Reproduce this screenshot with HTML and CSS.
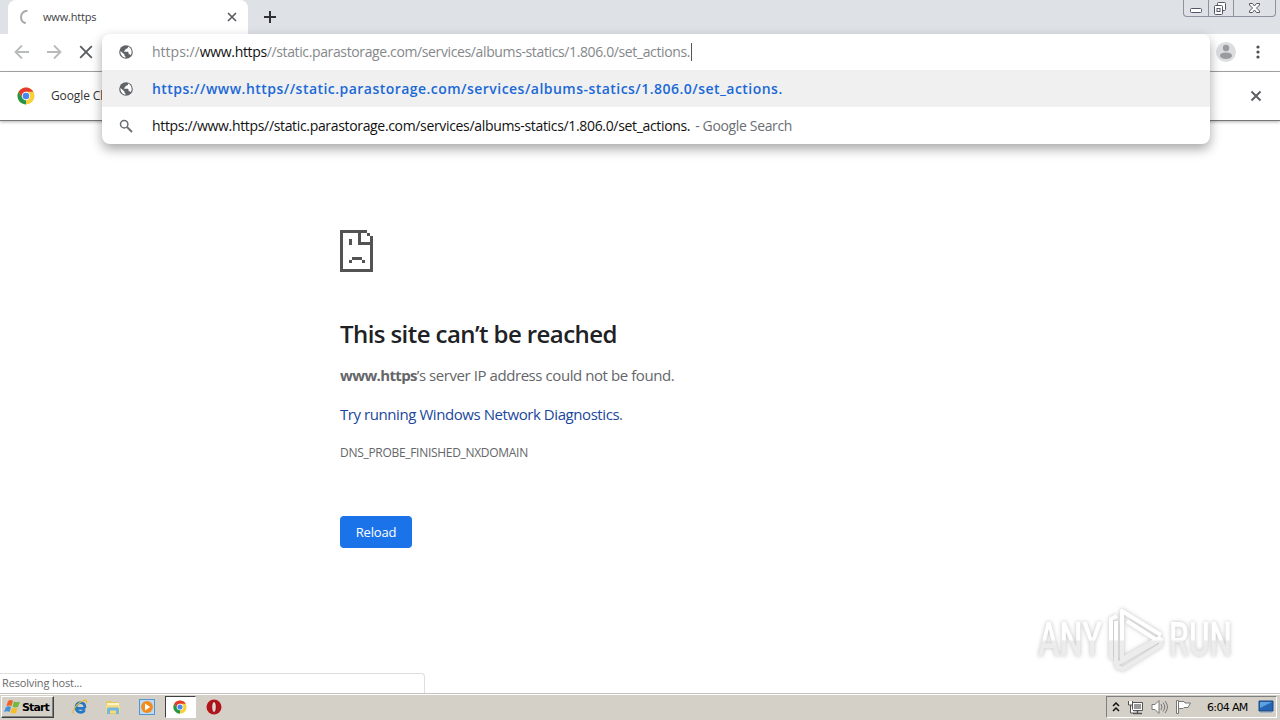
FILE: index.html
```html
<!DOCTYPE html>
<html lang="en">
<head>
    <meta charset="UTF-8">
    <meta name="viewport" content="width=device-width, initial-scale=1.0">
    <title>www.https</title>
    <link rel="stylesheet" href="styles.css">
</head>
<body>
    <div class="desktop">
        <header class="tab-strip">
            <div class="tab">
                <svg class="spinner" width="16" height="16" viewBox="0 0 16 16"><path d="M8.5 1.700C4.800 1.700 2 4.500 2 8s2.300 5.600 4.800 6.200" fill="none" stroke="#aaa" stroke-width="2"/></svg>
                <span class="tab-title">www.https</span>
                <svg width="10" height="10" viewBox="0 0 10 10"><path d="M1 1l8 8M9 1L1 9" stroke="#5a5d61" stroke-width="1.700"/></svg>
            </div>
            <svg class="new-tab" width="14" height="14" viewBox="0 0 14 14"><path d="M7 1v12M1 7h12" stroke="#303134" stroke-width="2"/></svg>
            <div class="window-buttons">
                <div class="win-btn">
                    <svg width="24" height="16" viewBox="0 0 24 16"><rect x="6.500" y="8.500" width="11" height="4" rx="1" fill="#fff" stroke="#535666"/></svg>
                </div>
                <div class="win-btn">
                    <svg width="24" height="16" viewBox="0 0 24 16" fill="#fff" stroke="#535666"><rect x="8.500" y="2.500" width="8" height="8" rx="1"/><rect x="5.500" y="5.500" width="8" height="9" rx="1"/><rect x="8" y="8.500" width="3" height="3"/></svg>
                </div>
                <div class="win-btn close">
                    <svg width="41" height="16" viewBox="0 0 41 16"><path d="M15.500 3.500h3l2 2.500 2-2.500h3v1.500l-3 3 3 3v1.500h-3l-2-2.500-2 2.500h-3V11l3-3-3-3z" fill="#fff" stroke="#535666"/></svg>
                </div>
            </div>
        </header>

        <nav class="toolbar">
            <svg width="16" height="16" viewBox="0 0 16 16"><path d="M15 8H2M8 1.500L1.500 8 8 14.500" fill="none" stroke="#b9babc" stroke-width="1.800"/></svg>
            <svg width="16" height="16" viewBox="0 0 16 16"><path d="M1 8h13M8 1.500L14.500 8 8 14.500" fill="none" stroke="#b9babc" stroke-width="1.800"/></svg>
            <svg width="16" height="16" viewBox="0 0 16 16"><path d="M2.200 2.200l11.600 11.600M13.800 2.200L2.200 13.800" stroke="#5a5d61" stroke-width="1.900"/></svg>
            <div class="toolbar-right">
                <svg width="20" height="20" viewBox="0 0 20 20"><circle cx="10" cy="10" r="10" fill="#dcdddf"/><circle cx="10" cy="6" r="3.200" fill="#999b9e"/><ellipse cx="10" cy="13.700" rx="6" ry="3.300" fill="#999b9e"/></svg>
                <svg width="4" height="14" viewBox="0 0 4 14" fill="#4d5054"><circle cx="2" cy="2" r="1.600"/><circle cx="2" cy="7" r="1.600"/><circle cx="2" cy="12" r="1.600"/></svg>
            </div>
        </nav>

        <div class="infobar">
            <svg width="18" height="18" viewBox="0 0 18 18"><use href="#chrome-logo"/></svg>
            <span class="infobar-text">Google Ch</span>
            <svg class="infobar-close" width="12" height="12" viewBox="0 0 12 12"><path d="M1.500 1.500l9 9M10.500 1.500l-9 9" stroke="#5a5d61" stroke-width="1.900"/></svg>
        </div>

        <div class="omnibox">
            <div class="row typed">
                <svg width="14" height="14" viewBox="0 0 14 14"><use href="#globe"/></svg>
                <span class="url"><span class="dim">https://</span><span class="host">www.https</span><span class="dim">//static.parastorage.com/services/albums-statics/1.806.0/set_actions.</span></span><span class="caret"></span>
            </div>
            <div class="row selected">
                <svg width="14" height="14" viewBox="0 0 14 14"><use href="#globe"/></svg>
                <span class="url match">https://www.https//static.parastorage.com/services/albums-statics/1.806.0/set_actions.</span>
            </div>
            <div class="row">
                <svg width="14" height="14" viewBox="0 0 14 14"><circle cx="5.200" cy="5.200" r="3.700" fill="none" stroke="#6a6d70" stroke-width="1.500"/><path d="M8 8l5 5" stroke="#6a6d70" stroke-width="1.800"/></svg>
                <span class="url">https://www.https//static.parastorage.com/services/albums-statics/1.806.0/set_actions.</span><span class="engine">- Google Search</span>
            </div>
        </div>

        <main class="error-page">
            <svg class="sad-page" width="33" height="42" viewBox="0 0 33 42" fill="#535353" shape-rendering="crispEdges">
                <path d="M0 0h27v3H3v36h27V15H18V3h3v9h9V6h3v36H0z"/>
                <path d="M27 3h3v3h-3zM9 9h3v6H9zM12 27h10v3H12zM9 30h3v3H9zM22 30h3v3h-3z"/>
            </svg>
            <h1>This site can’t be reached</h1>
            <p class="summary"><strong>www.https</strong>’s server IP address could not be found.</p>
            <p class="suggestion"><a>Try running Windows Network Diagnostics</a>.</p>
            <p class="code">DNS_PROBE_FINISHED_NXDOMAIN</p>
            <button class="reload">Reload</button>
        </main>

        <div class="status">Resolving host...</div>

        <svg class="watermark" width="220" height="76" viewBox="0 0 220 76">
            <defs>
                <linearGradient id="fade" gradientUnits="userSpaceOnUse" x1="0" y1="0" x2="0" y2="76">
                    <stop offset=".49" stop-color="#fff"/>
                    <stop offset=".52" stop-color="#ececec"/>
                </linearGradient>
            </defs>
            <g class="brand" fill="url(#fade)">
                <text x="8" y="54" textLength="64" lengthAdjust="spacingAndGlyphs">ANY</text>
                <text x="139" y="54" textLength="63" lengthAdjust="spacingAndGlyphs">RUN</text>
            </g>
            <g fill="none" stroke="url(#fade)" stroke-width="4" stroke-linejoin="round">
                <path d="M131 33L92 9v48l39-22"/>
                <path d="M81 57V17l6-3M86 19v43M97 19l31 20M87 62l44-25M87 59v6l6 2 38-24v-7"/>
            </g>
        </svg>

        <footer class="taskbar">
            <div class="start">
                <svg width="17" height="16" viewBox="0 0 17 16"><path d="M4 2q3-2 5 0L7.500 7q-2-1-5 0z" fill="#ef6527"/><path d="M10 2.500q3 1.500 6 0L14 8q-3 1-5.500-.5z" fill="#72b73e"/><path d="M2 8q3-1.500 5 0L5.500 13Q3 11.500 0 13z" fill="#4391d9"/><path d="M8 8.500q3 1.500 5.500.5L12 14q-3 1-5.500-.5z" fill="#f7bd25"/></svg>
                <span>Start</span>
            </div>
            <div class="launch">
                <svg width="16" height="16" viewBox="0 0 18 18"><path d="M15 10.500H5.300M14.500 10c.5-3.700-2-6-5-6s-5 2.500-5 5.700S7 15 9.500 15c2 0 3.800-1 4.500-2.500" fill="none" stroke="#2378c4" stroke-width="3.200"/><path d="M2 16C-1 16 3 8 9 4s9-3.500 7 .5" fill="none" stroke="#e9b934" stroke-width="1.300"/></svg>
            </div>
            <div class="launch">
                <svg width="18" height="18" viewBox="0 0 18 18"><path d="M2 3h5l1 1h7v12H2z" fill="#e8c766"/><path d="M3 5h12v4H3z" fill="#fff5c4"/><path d="M2 7h14v8H2z" fill="#f5dc83"/><path d="M3 16v-5q0-1.500 1.500-1.500h9Q15 9.500 15 11v5h-3v-3.500H6V16z" fill="#72b8de"/></svg>
            </div>
            <div class="launch">
                <svg width="18" height="18" viewBox="0 0 18 18"><rect x="1.500" y="1.500" width="15" height="15" fill="#b9dbf5" stroke="#5595ce"/><circle cx="9" cy="9" r="5.900" fill="#f28a1c"/><path d="M7 5.500L12.200 9 7 12.500z" fill="#fff"/></svg>
            </div>
            <div class="launch active">
                <svg width="14" height="14" viewBox="0 0 18 18"><use href="#chrome-logo"/></svg>
            </div>
            <div class="launch">
                <svg width="16" height="16" viewBox="0 0 16 16"><circle cx="8" cy="8" r="7.500" fill="#b31319"/><ellipse cx="8" cy="8" rx="2.300" ry="5.500" fill="#e9d4d1" stroke="#710509" stroke-width=".8"/></svg>
            </div>
            <div class="tray">
                <svg width="8" height="10" viewBox="0 0 8 10"><path d="M1 4l3-3 3 3M1 9l3-3 3 3" fill="none" stroke="#111" stroke-width="1.500"/></svg>
                <svg width="17" height="16" viewBox="0 0 17 16"><path d="M5.500 3.500h10v8h-10z" fill="#fff" stroke="#555"/><path d="M7 5h7v5H7z" fill="#999"/><path d="M6 14.500h9M10.500 12v2" stroke="#555" stroke-width="1.500"/><path d="M1.500 2v4h4V2M3.500 6v8H7" fill="#fff" stroke="#555"/></svg>
                <svg width="17" height="16" viewBox="0 0 17 16"><path d="M1 5.500h3l4-4v13l-4-4H1z" fill="#fff" stroke="#777"/><path d="M10 5q2 3 0 6M12 3.500q3.500 4.500 0 9M14 2q5 6 0 12" fill="none" stroke="#777"/></svg>
                <svg width="17" height="16" viewBox="0 0 17 16"><path d="M1.500 1.500h2v13h-2z" fill="#fff" stroke="#777"/><path d="M3.500 2.500H9L10 4h5.500L13 8.500H9l-1 1H3.500z" fill="#fff" stroke="#777"/></svg>
                <span class="clock">6:04 AM</span>
                <svg width="16" height="14" viewBox="0 0 16 14"><path d="M1 1h14v10H1z" fill="#2466b5" stroke="#174681"/><path d="M2 2h12L2 8z" fill="#5da2df"/><path d="M2 12.500h12" stroke="#a5b5c5"/></svg>
            </div>
        </footer>
    </div>

    <svg class="symbols" width="0" height="0">
        <symbol id="chrome-logo" viewBox="0 0 18 18">
            <circle cx="9" cy="9" r="8.500" fill="#f9cf3a"/>
            <path d="M1.640 4.750A8.500 8.500 0 0 1 16.360 4.750H9L5.300 11z" fill="#e33b2e"/>
            <path d="M1.640 4.750L5.300 11 9 13.300 9 17.500A8.500 8.500 0 0 1 1.640 4.750z" fill="#23964b"/>
            <circle cx="9" cy="9" r="4.200" fill="#fff"/>
            <circle cx="9" cy="9" r="3.300" fill="#4688ee"/>
        </symbol>
        <symbol id="globe" viewBox="0 0 14 14">
            <circle cx="7" cy="7" r="6.800" fill="#5f6368"/>
            <path d="M1.500 6l4 3.500v1.200l1 .8v1.300C3.500 12.500 1 9.500 1.500 6zM9 1.600v.9L8 3.800H6.500v1.300l-1.300.7v1h3.600l.8.800v1.600h1.300l.9 1C13.300 8 13.200 3.500 9 1.600z" fill="#fff"/>
        </symbol>
    </svg>
</body>
</html>
```
FILE: styles.css
```css
* {
    box-sizing: border-box;
}

body {
    margin: 0;
    font-family: "Open Sans", "Noto Sans", sans-serif;
    background: #fff;
}

svg {
    display: block;
    flex: none;
}

.symbols {
    position: absolute;
}

.desktop {
    position: relative;
    display: flex;
    flex-direction: column;
    width: 1280px;
    height: 720px;
    overflow: hidden;
}

/* Browser chrome */
.tab-strip {
    display: flex;
    height: 34px;
    flex: none;
    padding-left: 8px;
    background: #dee1e6;
}

.tab {
    display: flex;
    align-items: center;
    width: 240px;
    height: 34px;
    padding: 0 11px;
    background: #fff;
    border-radius: 8px 8px 0 0;
}

.tab-title {
    flex: 1;
    margin: -2px 0 0 8px;
    font-size: 11px;
    letter-spacing: -0.2px;
    color: #3c4043;
}

.new-tab {
    margin: 10px 0 0 15px;
}

.window-buttons {
    display: flex;
    height: 17px;
    margin: 0 4px 0 auto;
    border: 1px solid #8d929e;
    border-top: 0;
    border-radius: 0 0 4px 4px;
}

.win-btn + .win-btn {
    border-left: 1px solid #8d929e;
}

.toolbar {
    display: flex;
    align-items: center;
    gap: 16px;
    height: 38px;
    flex: none;
    padding: 0 20px 2px 14px;
    border-bottom: 1px solid #a8a8a8;
}

.toolbar-right {
    display: flex;
    align-items: center;
    gap: 20px;
    margin-left: auto;
}

.infobar {
    display: flex;
    align-items: center;
    height: 49px;
    flex: none;
    padding: 0 18px 0 17px;
    border-bottom: 1px solid #777;
    box-shadow: 0 1px 3px rgba(0, 0, 0, 0.3);
}

.infobar-text {
    margin: -2px 0 0 16px;
    font-size: 12px;
    letter-spacing: -0.1px;
    color: #333;
}

.infobar-close {
    margin-left: auto;
}

/* Address bar with its suggestions */
.omnibox {
    position: absolute;
    left: 102px;
    top: 34px;
    width: 1108px;
    height: 110px;
    background: #fff;
    border-radius: 8px;
    box-shadow: 0 5px 12px rgba(0, 0, 0, 0.35);
}

.row {
    display: flex;
    align-items: center;
    height: 37px;
    padding-left: 17px;
    font-size: 14px;
    white-space: nowrap;
    color: #111;
}

.row.typed {
    height: 36px;
    padding-bottom: 1px;
}

.row.selected {
    background: #f0f0f0;
}

.url {
    margin-left: 19px;
    letter-spacing: -0.335px;
}

.dim {
    color: #85888b;
}

.typed .dim:first-child {
    letter-spacing: 0;
}

.typed .dim:last-child {
    letter-spacing: -0.375px;
}

.match {
    font-weight: 600;
    letter-spacing: 0.465px;
    color: #1b69d6;
}

.caret {
    width: 1px;
    height: 18px;
    margin-left: 1px;
    background: #555;
}

.engine {
    margin-left: 5px;
    letter-spacing: -0.35px;
    color: #6b6e72;
}

/* Error page */
.error-page {
    flex: 1;
    display: flex;
    flex-direction: column;
    align-items: flex-start;
    padding: 109px 0 0 340px;
    font-size: 15px;
    line-height: 20px;
    color: #646669;
}

.error-page h1 {
    margin: 46px 0 0;
    font-size: 24px;
    font-weight: 600;
    line-height: 32px;
    letter-spacing: -0.58px;
    color: #202124;
}

.error-page p {
    margin: 0;
    white-space: nowrap;
}

.error-page .summary {
    margin-top: 15px;
    letter-spacing: -0.43px;
}

.summary strong {
    letter-spacing: -0.65px;
}

.error-page .suggestion {
    margin-top: 19px;
    letter-spacing: -0.43px;
}

.suggestion a {
    color: #1a479c;
}

.error-page .code {
    margin-top: 19px;
    font-size: 12px;
    letter-spacing: -0.3px;
}

.reload {
    width: 72px;
    height: 32px;
    margin-top: 53px;
    padding: 0;
    border: 0;
    border-radius: 4px;
    background: #1a73e8;
    color: #fff;
    font-family: inherit;
    font-size: 13px;
    letter-spacing: -0.2px;
}

.status {
    position: absolute;
    left: 0;
    top: 673px;
    width: 425px;
    height: 20px;
    padding-left: 2px;
    border: 1px solid #dedede;
    border-width: 1px 1px 0 0;
    border-radius: 0 4px 0 0;
    background: #fff;
    font-size: 11px;
    line-height: 18px;
    letter-spacing: -0.15px;
    color: #6a6a6a;
}

.watermark {
    position: absolute;
    left: 1030px;
    top: 602px;
    filter: drop-shadow(0 0 2px rgba(0, 0, 0, 0.25));
}

.brand {
    font-family: Roboto, sans-serif;
    font-size: 48px;
    font-weight: 500;
}

/* Taskbar */
.taskbar {
    display: flex;
    align-items: center;
    height: 27px;
    flex: none;
    padding: 0 3px 0 1px;
    background: #d4d0c8;
    border-top: 1px solid #c4c2bd;
    box-shadow: inset 0 1px #fff;
}

.start {
    display: flex;
    align-items: center;
    gap: 1px;
    width: 53px;
    height: 22px;
    margin-right: 10px;
    padding-left: 2px;
    border: 1px solid;
    border-color: #fff #404040 #404040 #fff;
    box-shadow: inset -1px -1px #808080;
    font-family: "DejaVu Sans", sans-serif;
    font-size: 11px;
    font-weight: bold;
    letter-spacing: -0.9px;
    color: #000;
}

.launch {
    display: flex;
    align-items: center;
    justify-content: center;
    width: 31px;
    height: 22px;
    margin-right: 2.5px;
}

.launch.active {
    background: #fff;
    border: 1px solid;
    border-color: #404040 #fff #fff #404040;
}

.tray {
    display: flex;
    align-items: center;
    width: 171px;
    height: 22px;
    margin-left: auto;
    padding-left: 5px;
    gap: 7px;
    border: 1px solid;
    border-color: #808080 #fff #fff #808080;
}

.clock {
    margin: 0 3px 0 8px;
    font-family: "DejaVu Sans", sans-serif;
    font-size: 11px;
    letter-spacing: -0.65px;
    white-space: nowrap;
    color: #000;
}
```
